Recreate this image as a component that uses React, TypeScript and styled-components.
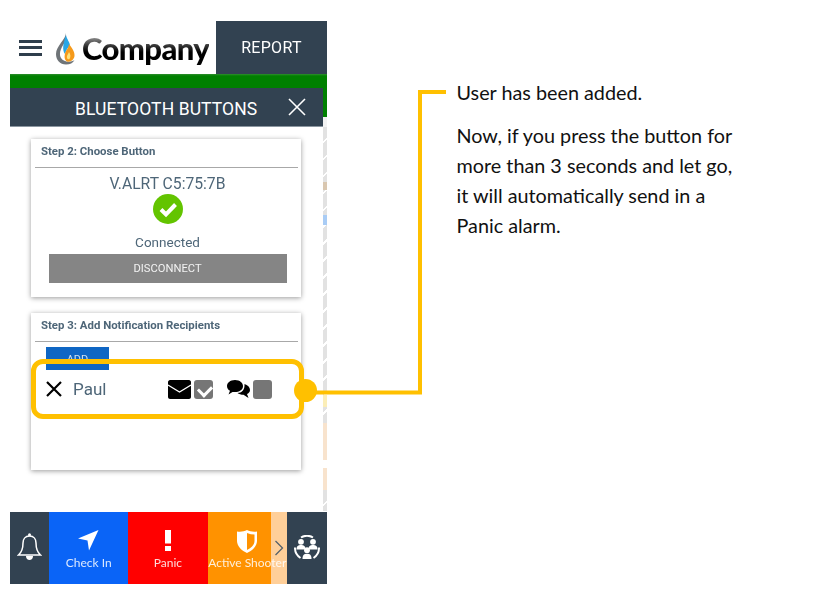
import React from "react";
import styled, { createGlobalStyle } from "styled-components";

const App: React.FC = () => {
  return (
    <>
      <GlobalStyle />
      <Page>
        <Phone>
          <Header>
            <Brand>
              <Burger>
                <span />
                <span />
                <span />
              </Burger>
              <Flame />
              <LogoText>Company</LogoText>
            </Brand>
            <ReportTab>REPORT</ReportTab>
          </Header>
          <GreenBar />
          <Middle>
            <Modal>
              <ModalTitle>
                <span>BLUETOOTH BUTTONS</span>
                <CloseButton>
                  <svg width="20" height="20" viewBox="0 0 20 20">
                    <path d="M2 2 L18 18 M18 2 L2 18" stroke="#fff" strokeWidth="1.6" fill="none" />
                  </svg>
                </CloseButton>
              </ModalTitle>
              <ModalBody>
                <Card $height={158}>
                  <CardTitle>Step 2: Choose Button</CardTitle>
                  <DeviceBlock>
                    <DeviceName>V.ALRT C5:75:7B</DeviceName>
                    <CheckCircle />
                    <Status>Connected</Status>
                    <DisconnectButton>DISCONNECT</DisconnectButton>
                  </DeviceBlock>
                </Card>
                <Card $height={157}>
                  <CardTitle>Step 3: Add Notification Recipients</CardTitle>
                  <AddButton>ADD</AddButton>
                  <RecipientRow>
                    <RemoveIcon />
                    <RecipientName>Paul</RecipientName>
                    <Channels>
                      <Channel>
                        <EnvelopeIcon />
                        <Tick $checked />
                      </Channel>
                      <Channel>
                        <ChatIcon />
                        <Tick />
                      </Channel>
                    </Channels>
                  </RecipientRow>
                </Card>
              </ModalBody>
            </Modal>
            <MapStrip>
              <MapGreen />
              <MapPale />
              <MapRoads $height={296} $marks />
              <MapPeach $height={37} />
              <MapGap />
              <MapPeach $height={22} />
              <MapRoads $height={21} />
            </MapStrip>
          </Middle>
          <ActionBar>
            <BellTab>
              <BellIcon />
            </BellTab>
            <Action $bg="#0a64f7">
              <ArrowIcon />
              <ActionLabel>Check In</ActionLabel>
            </Action>
            <Action $bg="#ff0000">
              <AlertIcon />
              <ActionLabel>Panic</ActionLabel>
            </Action>
            <Action $bg="#ff9200">
              <ShieldIcon />
              <ActionLabel>Active Shooter</ActionLabel>
              <MoreTab>
                <svg width="10" height="16" viewBox="0 0 10 16">
                  <path d="M1.5 1 L8.5 8 L1.5 15" stroke="#56616b" strokeWidth="1.3" fill="none" />
                </svg>
              </MoreTab>
            </Action>
            <GroupTab>
              <GroupIcon />
            </GroupTab>
          </ActionBar>
        </Phone>

        <Note>
          <NoteLine>User has been added.</NoteLine>
          <NoteBody>
            Now, if you press the button for
            <br />
            more than 3 seconds and let go,
            <br />
            it will automatically send in a
            <br />
            Panic alarm.
          </NoteBody>
        </Note>

        <Highlight />
        <HighlightDot />
        <Connector width="130" height="306" viewBox="0 0 130 306">
          <path d="M0 302.500 H104 V2 H130" stroke="#ffc000" strokeWidth="4" fill="none" />
        </Connector>
      </Page>
    </>
  );
};

export default App;

const Flame = () => (
  <FlameSvg width="21" height="32" viewBox="0 0 21 32">
    <path
      d="M11 0 C11 6 1 13 1 21 C1 27 5 31.5 11 31.5 C15 31.5 18 30 19.5 27 C16 29.5 9 29.5 6 25 C3 20 7 13 11 8 Z"
      fill="#6f7478"
    />
    <path d="M11 2 C12 7 15 9 15 13 C13 14 11 17 10 21 C7 17 8 11 11 2 Z" fill="#27a6e6" />
    <path
      d="M14 11 C17 15 20 19 19.5 23 C19 27 15 29.5 12 28.5 C9 27 9 22 11 18 C12 16 14 14 14 11 Z"
      fill="#f59a1b"
    />
    <path d="M14 19 C15.5 21 16 24 14.5 26 C13 27 11.5 25.5 12 23 C12.5 21.5 13.5 20.5 14 19 Z" fill="#ffe27a" />
  </FlameSvg>
);

const CheckCircle = () => (
  <CheckSvg width="30" height="30" viewBox="0 0 30 30">
    <circle cx="15" cy="15" r="15" fill="#63c400" />
    <path d="M8 15.5 L13 20.5 L22.5 10.5" stroke="#fff" strokeWidth="4" fill="none" />
  </CheckSvg>
);

const RemoveIcon = () => (
  <svg width="18" height="18" viewBox="0 0 18 18">
    <path d="M2 2 L16 16 M16 2 L2 16" stroke="#000" strokeWidth="2.2" fill="none" />
  </svg>
);

const EnvelopeIcon = () => (
  <svg width="23" height="19" viewBox="0 0 23 19">
    <path d="M2 0 H21 C22 0 23 1 23 2 V17 C23 18 22 19 21 19 H2 C1 19 0 18 0 17 V2 C0 1 1 0 2 0 Z" fill="#000" />
    <path d="M0 5 L11.500 12 L23 5" stroke="#fff" strokeWidth="1.200" fill="none" />
  </svg>
);

const ChatIcon = () => (
  <svg width="23" height="19" viewBox="0 0 23 19">
    <path
      d="M8 0 C13 0 16 3 16 6 C16 10 12 12 8 12 C7 12 6.500 12 5.500 12 L1.500 14.500 L3 10.800 C1 10 0 8 0 6 C0 3 3 0 8 0 Z"
      fill="#000"
    />
    <path
      d="M17.500 4 C20.500 5 23 7 23 10 C23 12 21.500 13.500 20 14 L21.500 18 L16.500 14.800 C14 14.800 12 14 10.500 13 C14.500 13 18 10 17.500 4 Z"
      fill="#000"
    />
  </svg>
);

const BellIcon = () => (
  <svg width="25" height="28" viewBox="0 0 25 28">
    <path
      d="M12.500 3 C8 3 6 6.500 6 10 C6 16 5 19 1.500 22 H23.500 C20 19 19 16 19 10 C19 6.500 17 3 12.500 3 Z"
      stroke="#fff"
      strokeWidth="1.500"
      fill="none"
    />
    <circle cx="12.500" cy="1.800" r="1.500" fill="#fff" />
    <path d="M9 23 H16 C16 25.500 14.500 27 12.500 27 C10.500 27 9 25.500 9 23 Z" fill="#fff" />
  </svg>
);

const ArrowIcon = () => (
  <svg width="21" height="21" viewBox="0 0 21 21">
    <path d="M20.500 0 L11 20.500 L9.500 10.500 L0 8.500 Z" fill="#fff" />
  </svg>
);

const AlertIcon = () => (
  <svg width="8" height="21" viewBox="0 0 8 21">
    <path d="M1 0 H7 V13.500 H1 Z M1 16 H7 V21 H1 Z" fill="#fff" />
  </svg>
);

const ShieldIcon = () => (
  <ShieldSvg width="20" height="23" viewBox="0 0 20 23">
    <path
      d="M0 1.500 C4 2 7 1.500 10 0 C13 1.500 16 2 20 1.500 V11 C20 16 15 21 10 23 C5 21 0 16 0 11 Z"
      fill="#fff"
    />
    <path d="M10 3 C12.500 4 15 4.500 17.500 4.500 V11 C17.500 15 13.500 18.500 10 20 Z" fill="#ff9200" />
  </ShieldSvg>
);

const GroupIcon = () => (
  <svg width="26" height="26" viewBox="0 0 26 26">
    <path d="M7 2.500 A12 12 0 0 1 19 2.500" stroke="#fff" strokeWidth="2" fill="none" />
    <path d="M1 12.500 A12 12 0 0 0 6.500 23" stroke="#fff" strokeWidth="2" fill="none" />
    <path d="M25 12.500 A12 12 0 0 1 19.500 23" stroke="#fff" strokeWidth="2" fill="none" />
    <circle cx="7" cy="6.800" r="2.900" fill="#fff" />
    <path d="M2.500 14.500 C2.500 11 4.300 10 7 10 C9.700 10 11.500 11 11.500 14.500 Z" fill="#fff" />
    <circle cx="19" cy="6.800" r="2.900" fill="#fff" />
    <path d="M14.500 14.500 C14.500 11 16.300 10 19 10 C21.700 10 23.500 11 23.500 14.500 Z" fill="#fff" />
    <circle cx="13" cy="15.200" r="2.900" fill="#fff" />
    <path d="M8.500 24 C8.500 20 10.300 18.800 13 18.800 C15.700 18.800 17.500 20 17.500 24 Z" fill="#fff" />
  </svg>
);

const GlobalStyle = createGlobalStyle`
  html, body {
    margin: 0;
    padding: 0;
    background: #fff;
  }
  * {
    box-sizing: border-box;
  }
`;

const Page = styled.div`
  position: relative;
  width: 814px;
  height: 616px;
  padding: 21px 0 0 10px;
  display: flex;
  align-items: flex-start;
  overflow: hidden;
  background: #fff;
  font-family: Roboto, "Liberation Sans", sans-serif;
`;

const Phone = styled.div`
  width: 317px;
  height: 563px;
  display: flex;
  flex-direction: column;
  flex-shrink: 0;
  filter: blur(0.35px);
`;

const Header = styled.div`
  height: 53px;
  display: flex;
`;

const Brand = styled.div`
  width: 206px;
  display: flex;
  align-items: center;
  padding: 0 0 0 9px;
`;

const Burger = styled.div`
  width: 23px;
  flex-shrink: 0;
  display: flex;
  flex-direction: column;
  gap: 3.500px;
  margin-right: 13px;

  span {
    display: block;
    height: 3px;
    background: #2f3e4c;
  }
`;

const FlameSvg = styled.svg`
  flex-shrink: 0;
  margin: 2px 6px 0 0;
`;

const LogoText = styled.div`
  font-family: Lato, "Open Sans", sans-serif;
  font-weight: 900;
  font-size: 31px;
  letter-spacing: -0.6px;
  line-height: 42px;
  white-space: nowrap;
  background: linear-gradient(#9a9a9a 22%, #333 45%, #000 60%);
  -webkit-background-clip: text;
  background-clip: text;
  color: transparent;
`;

const ReportTab = styled.div`
  width: 111px;
  display: flex;
  align-items: center;
  justify-content: center;
  background: #324251;
  color: #fff;
  font-size: 16px;
  letter-spacing: 0.3px;
`;

const GreenBar = styled.div`
  height: 14px;
  background: linear-gradient(#2f8f2f 0, #008000 2px);
`;

const Middle = styled.div`
  flex: 1;
  display: flex;
  min-height: 0;
`;

const Modal = styled.div`
  width: 313px;
  display: flex;
  flex-direction: column;
  background: #fff;
`;

const ModalTitle = styled.div`
  position: relative;
  height: 39px;
  flex-shrink: 0;
  display: flex;
  align-items: center;
  padding: 3px 0 0 65px;
  background: #324251;
  border-bottom: 1px solid #8b96a0;
  color: #fff;
  font-size: 17.500px;
  letter-spacing: 0.1px;
`;

const CloseButton = styled.div`
  position: absolute;
  right: 16px;
  top: 9px;
  line-height: 0;
`;

const ModalBody = styled.div`
  flex: 1;
  display: flex;
  flex-direction: column;
  gap: 16px;
  padding: 12px 0 0 21px;
`;

const Card = styled.div<{ $height: number }>`
  position: relative;
  width: 270px;
  height: ${({ $height }) => `${$height}px`};
  padding: 0 3px 0 4px;
  background: #fff;
  box-shadow: 0 1px 5px rgba(0, 0, 0, 0.4);
`;

const CardTitle = styled.div`
  height: 29px;
  padding: 6px 0 0 6px;
  border-bottom: 1.500px solid #a8a8a8;
  color: #4e6678;
  font-size: 11.400px;
  font-weight: 700;
  line-height: 13px;
  white-space: nowrap;
`;

const DeviceBlock = styled.div`
  display: flex;
  flex-direction: column;
  align-items: center;
  padding-left: 2px;
`;

const DeviceName = styled.div`
  margin-top: 7px;
  color: #4e6678;
  font-size: 15.700px;
  line-height: 18px;
`;

const CheckSvg = styled.svg`
  margin-top: 1px;
`;

const Status = styled.div`
  margin-top: 10px;
  color: #4e6678;
  font-size: 13.500px;
  line-height: 16px;
`;

const DisconnectButton = styled.div`
  width: 238px;
  height: 29px;
  margin-top: 4px;
  display: flex;
  align-items: center;
  justify-content: center;
  background: #858585;
  color: #f2f2f2;
  font-size: 11.200px;
`;

const AddButton = styled.div`
  width: 63px;
  height: 23px;
  margin: 5px 0 0 11px;
  padding-top: 6px;
  text-align: center;
  background: #0f66c4;
  color: #cfe0f2;
  font-size: 11px;
`;

const RecipientRow = styled.div`
  display: flex;
  align-items: center;
  height: 24px;
  margin: 7px 0 0 10px;
`;

const RecipientName = styled.div`
  margin-left: 10px;
  color: #4e6678;
  font-size: 17px;
`;

const Channels = styled.div`
  display: flex;
  gap: 14px;
  margin-left: 62px;
`;

const Channel = styled.div`
  display: flex;
  align-items: center;
  gap: 3px;
`;

const Tick = styled.div<{ $checked?: boolean }>`
  position: relative;
  width: 19px;
  height: 19px;
  border-radius: 3px;
  background: #767676;

  &::after {
    content: "";
    display: ${({ $checked }) => ($checked ? "block" : "none")};
    position: absolute;
    left: 6px;
    top: 3px;
    width: 7px;
    height: 10px;
    border: solid #fff;
    border-width: 0 3px 3px 0;
    transform: rotate(45deg);
  }
`;

const MapStrip = styled.div`
  width: 4px;
  display: flex;
  flex-direction: column;
`;

const MapGreen = styled.div`
  height: 29px;
  background: #008000;
`;

const MapPale = styled.div`
  height: 10px;
  background: #f2f2f2;
`;

const MapRoads = styled.div<{ $height: number; $marks?: boolean }>`
  height: ${({ $height }) => `${$height}px`};
  background: ${({ $marks }) =>
      $marks
        ? `linear-gradient(#d9c7b0, #d9c7b0) 0 55px / 100% 8px no-repeat,
           linear-gradient(#a9ccf5, #a9ccf5) 0 88px / 100% 10px no-repeat,
           linear-gradient(#fbeeb8, #fbeeb8) 0 268px / 100% 12px no-repeat,`
        : ""}
    repeating-linear-gradient(135deg, #e2e2e2 0 10px, #fff 10px 12px);
`;

const MapPeach = styled.div<{ $height: number }>`
  height: ${({ $height }) => `${$height}px`};
  background: #f8e3cd;
`;

const MapGap = styled.div`
  height: 8px;
  background: #fff;
`;

const ActionBar = styled.div`
  height: 72px;
  flex-shrink: 0;
  display: flex;
`;

const BellTab = styled.div`
  width: 39px;
  display: flex;
  align-items: center;
  justify-content: center;
  padding-bottom: 2px;
  background: #324251;
`;

const Action = styled.div<{ $bg: string }>`
  position: relative;
  width: 79.300px;
  display: flex;
  flex-direction: column;
  align-items: center;
  padding-top: 18px;
  background: ${({ $bg }) => $bg};

  svg {
    position: relative;
    z-index: 1;
  }
`;

const ShieldSvg = styled.svg`
  margin-bottom: -2px;
`;

const ActionLabel = styled.div`
  position: relative;
  z-index: 2;
  margin-top: 4px;
  color: #fff;
  font-family: Lato, "Open Sans", sans-serif;
  font-size: 12px;
  line-height: 15px;
  white-space: nowrap;
  opacity: 0.85;
`;

const MoreTab = styled.div`
  position: absolute;
  top: 0;
  right: 0;
  bottom: 0;
  z-index: 1;
  width: 16px;
  display: flex;
  align-items: center;
  justify-content: center;
  padding-left: 1px;
  background: #ffcf99;
`;

const GroupTab = styled.div`
  width: 40px;
  display: flex;
  align-items: center;
  justify-content: center;
  background: #324251;
`;

const Note = styled.div`
  margin: 58px 0 0 129.500px;
  color: #111;
  font-family: Lato, "Open Sans", sans-serif;
  font-size: 19.800px;
  white-space: nowrap;
`;

const NoteLine = styled.div`
  line-height: 26px;
`;

const NoteBody = styled.div`
  margin-top: 15px;
  line-height: 30px;
`;

const Highlight = styled.div`
  position: absolute;
  left: 31px;
  top: 359px;
  width: 273px;
  height: 60px;
  border: 5.500px solid #ffc000;
  border-radius: 12px;
`;

const HighlightDot = styled.div`
  position: absolute;
  left: 294px;
  top: 379px;
  width: 23px;
  height: 23px;
  border-radius: 50%;
  background: #ffc000;
`;

const Connector = styled.svg`
  position: absolute;
  left: 316px;
  top: 90px;
  overflow: visible;
`;
